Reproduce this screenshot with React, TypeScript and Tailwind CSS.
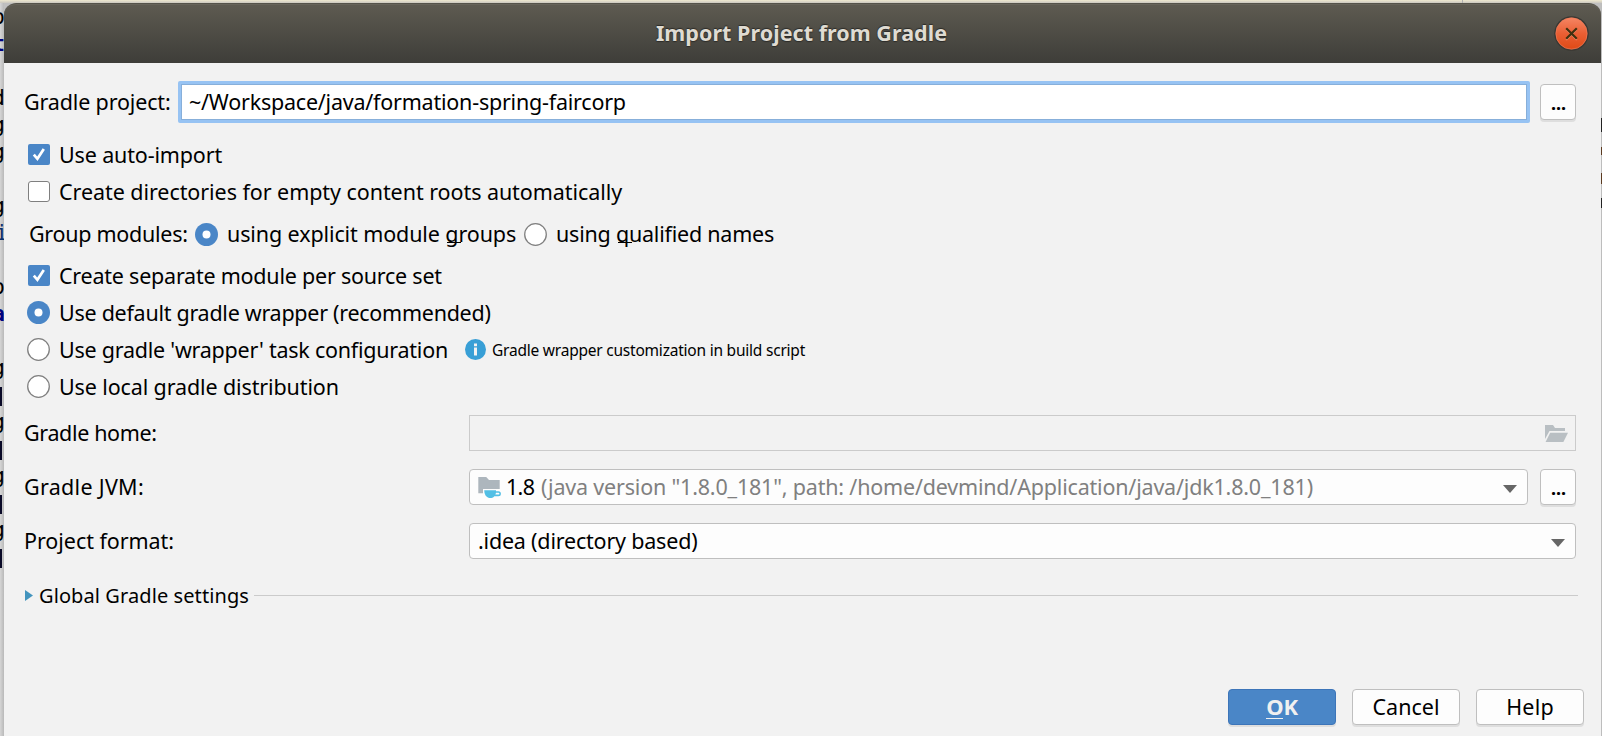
import type { ReactNode } from "react";

const editorLines: { ch: string; tone: string }[] = [
  { ch: "o", tone: "-mr-[1px] text-black" },
  { ch: "t", tone: "-mr-[1px] text-[#00007f] font-bold" },
  { ch: "", tone: "" },
  { ch: "d", tone: "-mr-[1px] text-black" },
  { ch: "g", tone: "-mr-[1px] text-black" },
  { ch: "g", tone: "-mr-[1px] text-black" },
  { ch: "", tone: "" },
  { ch: "g", tone: "-mr-[1px] text-black" },
  { ch: "i", tone: "-mr-[4px] text-[#0b2f6b]" },
  { ch: "", tone: "" },
  { ch: "o", tone: "-mr-[1px] text-black" },
  { ch: "a", tone: "-mr-[1px] text-[#00007f] font-bold" },
  { ch: "", tone: "" },
  { ch: "g", tone: "-mr-[1px] text-black" },
  { ch: "l", tone: "bar" },
  { ch: "g", tone: "-mr-[1px] text-black" },
  { ch: "l", tone: "bar" },
  { ch: "g", tone: "-mr-[1px] text-black" },
  { ch: "l", tone: "bar" },
  { ch: "g", tone: "-mr-[1px] text-black" },
  { ch: "l", tone: "bar" },
];

function EditorEdge() {
  return (
    <div className="flex w-1 shrink-0 flex-col overflow-hidden bg-linear-to-r from-[#d6d6d6] to-[#b9b9b9] font-['DejaVu_Sans_Mono',monospace] text-[21px]">
      {editorLines.map((l, i) => (
        <div key={i} className="flex h-[27px] shrink-0 items-center justify-end leading-[26px]">
          {l.tone === "bar" ? (
            <span className="mt-[3px] mr-[2px] h-[19px] w-[2px] bg-[#0a0a28]" />
          ) : (
            <span className={l.tone}>{l.ch}</span>
          )}
        </div>
      ))}
    </div>
  );
}

function Check({ on }: { on?: boolean }) {
  return on ? (
    <svg className="h-[21px] w-[22px] shrink-0" viewBox="0 0 22 21">
      <rect width="22" height="21" rx="2" fill="#4a86c7" />
      <path d="M5.8 10.6 9.4 14.8 15.8 5" fill="none" stroke="#fff" strokeWidth="2.7" />
    </svg>
  ) : (
    <span className="h-[21px] w-[22px] shrink-0 rounded-[3px] border border-[#7f7f7f] bg-white" />
  );
}

function Radio({ on }: { on?: boolean }) {
  return (
    <svg className="size-[23px] shrink-0" viewBox="0 0 23 23">
      {on ? (
        <>
          <circle cx="11.5" cy="11.5" r="11.5" fill="#4a86c7" />
          <circle cx="11.5" cy="11.5" r="4" fill="#fff" />
        </>
      ) : (
        <circle cx="11.5" cy="11.5" r="10.8" fill="#fff" stroke="#808080" strokeWidth="1.3" />
      )}
    </svg>
  );
}

function Mnemonic({ children }: { children: ReactNode }) {
  return (
    <span className="relative">
      {children}
      <span className="absolute bottom-[5px] left-[2px] h-px w-[14px] bg-black" />
    </span>
  );
}

function Dots() {
  return (
    <button className="flex h-9 w-9 shrink-0 items-center justify-center rounded-[4px] border border-[#bfbfbf] bg-[#fdfdfd] pt-[2px] pl-[1px] text-[18px] font-bold shadow-[0_2px_0_#dedede]">
      ...
    </button>
  );
}

function Arrow() {
  return (
    <svg className="mt-[3px] mr-[10px] ml-auto h-2 w-[14px] shrink-0" viewBox="0 0 14 8">
      <path d="M0 0H14L7 8Z" fill="#666" />
    </svg>
  );
}

function Row({ label, track, children }: { label: string; track: string; children: ReactNode }) {
  return (
    <div className="flex h-9 items-center">
      <span className={`w-[446px] shrink-0 pl-px ${track}`}>{label}</span>
      {children}
    </div>
  );
}

export default function App() {
  return (
    <div className="flex h-[736px] w-[1602px] flex-col overflow-hidden bg-[#bfbfbf] font-['Noto_Sans',sans-serif] text-[21.5px] leading-[30px] whitespace-nowrap text-black">
      <div className="flex h-[3px] shrink-0 bg-linear-to-b from-[#efe9cf] to-[#cbc8c0]">
        <div className="ml-[1462px] h-full w-px bg-[#b0b0b0]" />
      </div>
      <div className="flex min-h-0 flex-1">
        <EditorEdge />
        <div className="flex w-[1597px] shrink-0 flex-col rounded-t-[12px] bg-[#f2f2f2]">
          <header className="flex h-[60px] shrink-0 items-center rounded-t-[12px] border-t border-[#55534a] bg-linear-to-b from-[#5e5b51] to-[#3e3d39] pr-[12px] shadow-[inset_0_1px_0_#67645a]">
            <h1 className="flex-1 pb-[2px] pl-[45px] text-center text-[21.5px] font-bold tracking-[0.04px] text-[#dfdbd2] [text-shadow:0_-1px_1px_#2c2b28,0_1px_1px_#2c2b28]">
              Import Project from Gradle
            </h1>
            <svg className="mb-px size-[35px]" viewBox="0 0 35 35">
              <defs>
                <linearGradient id="close" x1="0" y1="0" x2="0" y2="1">
                  <stop offset="0" stopColor="#f58563" />
                  <stop offset="0.5" stopColor="#ea5f34" />
                  <stop offset="1" stopColor="#df4a16" />
                </linearGradient>
              </defs>
              <circle cx="17.5" cy="17.5" r="17.3" fill="#393733" />
              <circle cx="17.5" cy="17.5" r="15.7" fill="url(#close)" stroke="#f47c57" strokeWidth="0.7" />
              <path d="M12.2 13.2 22.8 23.8M22.8 13.2 12.2 23.8" stroke="#f48a68" strokeWidth="1.8" />
              <path d="M12.2 12.2 22.8 22.8M22.8 12.2 12.2 22.8" stroke="#40300f" strokeWidth="2.2" />
            </svg>
          </header>

          <main className="flex flex-1 flex-col pt-[18px] pl-[19px]">
            <div className="flex h-[42px] items-center">
              <span className="w-[155px] shrink-0 pl-px tracking-[-0.15px]">Gradle project:</span>
              <div className="h-[42px] w-[1352px] shrink-0 rounded-[2px] bg-[#97c3f3] p-[3px]">
                <div className="flex h-full items-center border border-[#87afda] bg-white pl-[7px] tracking-[-0.22px]">
                  ~/Workspace/java/formation-spring-faircorp
                </div>
              </div>
              <div className="ml-[10px]">
                <Dots />
              </div>
            </div>

            <div className="mt-[13px] flex h-[37px] items-center gap-[9px] pl-[5px] tracking-[-0.15px]">
              <Check on />
              Use auto-import
            </div>
            <div className="flex h-[37px] items-center gap-[9px] pl-[5px] tracking-[-0.06px]">
              <Check />
              Create directories for empty content roots automatically
            </div>
            <div className="flex h-12 items-center pl-[5px]">
              <span className="w-[167px] shrink-0 pl-px tracking-[-0.28px]">Group modules:</span>
              <Radio on />
              <span className="ml-[9px] w-[297px] shrink-0 tracking-[-0.11px]">
                using explicit module <Mnemonic>g</Mnemonic>roups
              </span>
              <Radio />
              <span className="ml-[9px] tracking-[-0.22px]">
                using <Mnemonic>q</Mnemonic>ualified names
              </span>
            </div>
            <div className="flex h-[35px] items-center gap-[9px] pl-[5px] tracking-[-0.23px]">
              <Check on />
              Create separate module per source set
            </div>
            <div className="mt-px flex h-[37px] items-center gap-[9px] pl-1 tracking-[-0.27px]">
              <Radio on />
              Use default gradle wrapper (recommended)
            </div>
            <div className="flex h-[37px] items-center pl-1">
              <Radio />
              <span className="ml-[9px] w-[406px] shrink-0 tracking-[-0.24px]">Use gradle 'wrapper' task configuration</span>
              <svg className="size-[21px] shrink-0" viewBox="0 0 21 21">
                <circle cx="10.5" cy="10.5" r="10.5" fill="#389fd6" />
                <path d="M9 4.6h3v2.6H9zM9 8.6h3v8H9z" fill="#f2f2f2" />
              </svg>
              <span className="ml-[6px] text-[15.5px] tracking-[-0.22px]">Gradle wrapper customization in build script</span>
            </div>
            <div className="flex h-[37px] items-center gap-[9px] pl-1 tracking-[-0.12px]">
              <Radio />
              Use local gradle distribution
            </div>

            <div className="mt-[10px] flex flex-col gap-[18px]">
              <Row label="Gradle home:" track="tracking-[-0.36px]">
                <div className="flex h-9 w-[1107px] items-center justify-end border border-[#cbcbcb] pr-[7px]">
                  <svg className="h-[17px] w-[23px]" viewBox="0 0 23 17">
                    <path d="M0 0H8L10 3H20V6H4.5L0 14Z" fill="#b9bfc3" />
                    <path d="M5.2 7.8H23L18.4 17H0.6Z" fill="#b9bfc3" />
                  </svg>
                </div>
              </Row>
              <Row label="Gradle JVM:" track="tracking-[0.3px]">
                <div className="flex h-9 w-[1059px] items-center rounded-[4px] border border-[#bfbfbf] bg-[#fdfdfd] pl-2">
                  <svg className="h-[21px] w-[23px] shrink-0" viewBox="0 0 23 21">
                    <path d="M0.3 0H8.2L11 3H21.7V12H5V16.3H0.3Z" fill="#adb6bd" />
                    <path d="M6.2 13.3H18V14.2H20.4a2.2 2.2 0 0 1 0 5H16.4a5.5 5.5 0 0 1-3 1.8H11C8.2 20.2 6.2 17.5 6.2 13.3Z" fill="#52bfe5" />
                    <path d="M18 15.8H20.5a0.9 0.9 0 0 1 0 1.8H17.4Z" fill="#fdfdfd" />
                  </svg>
                  <span className="ml-[5px] w-[35px] shrink-0 tracking-[-0.7px]">1.8</span>
                  <span className="tracking-[-0.19px] text-[#808080]">
                    (java version "1.8.0_181", path: /home/devmind/Application/java/jdk1.8.0_181)
                  </span>
                  <Arrow />
                </div>
                <div className="ml-3">
                  <Dots />
                </div>
              </Row>
              <Row label="Project format:" track="tracking-[-0.05px]">
                <div className="flex h-9 w-[1107px] items-center rounded-[4px] border border-[#bfbfbf] bg-[#fdfdfd] pl-2">
                  <span className="tracking-[-0.2px]">.idea (directory based)</span>
                  <Arrow />
                </div>
              </Row>
              <div className="flex h-9 w-[1555px] items-center pl-[2px]">
                <svg className="mr-[6px] h-[11px] w-[8px] shrink-0" viewBox="0 0 8 11">
                  <path d="M0 0 8 5.5 0 11Z" fill="#4394be" />
                </svg>
                <span className="w-[215px] shrink-0 pt-[2px] text-[20px] tracking-[0.09px]">Global Gradle settings</span>
                <span className="h-px flex-1 bg-[#cbcbcb]" />
              </div>
            </div>

            <footer className="mt-auto mb-[11px] ml-auto flex h-9 gap-4 pr-[17px]">
              <button className="flex w-[108px] items-center justify-center rounded-[4px] border border-[#3d75b9] bg-[#4a86c7] pb-px text-[22px] font-bold tracking-[-0.3px] text-[#f0f0f0] shadow-[0_2px_0_#dedede]">
                <span className="h-[24px] border-b border-[#f0f0f0] leading-[23px]">O</span>
                <span className="h-[24px] leading-[23px]">K</span>
              </button>
              <button className="w-[108px] rounded-[4px] border border-[#bfbfbf] bg-[#fdfdfd] shadow-[0_2px_0_#dedede]">
                Cancel
              </button>
              <button className="w-[108px] rounded-[4px] border border-[#bfbfbf] bg-[#fdfdfd] tracking-[0.2px] shadow-[0_2px_0_#dedede]">
                Help
              </button>
            </footer>
          </main>
        </div>
        <div className="w-px shrink-0 bg-[#bdbdbd] pt-[115px]">
          <div className="h-[14px] bg-[#222]" />
          <div className="mt-[15px] h-[8px] bg-[#5b3a20]" />
          <div className="mt-[18px] h-[11px] bg-[#5b3a20]" />
          <div className="mt-[14px] h-[10px] bg-[#222]" />
        </div>
      </div>
    </div>
  );
}
